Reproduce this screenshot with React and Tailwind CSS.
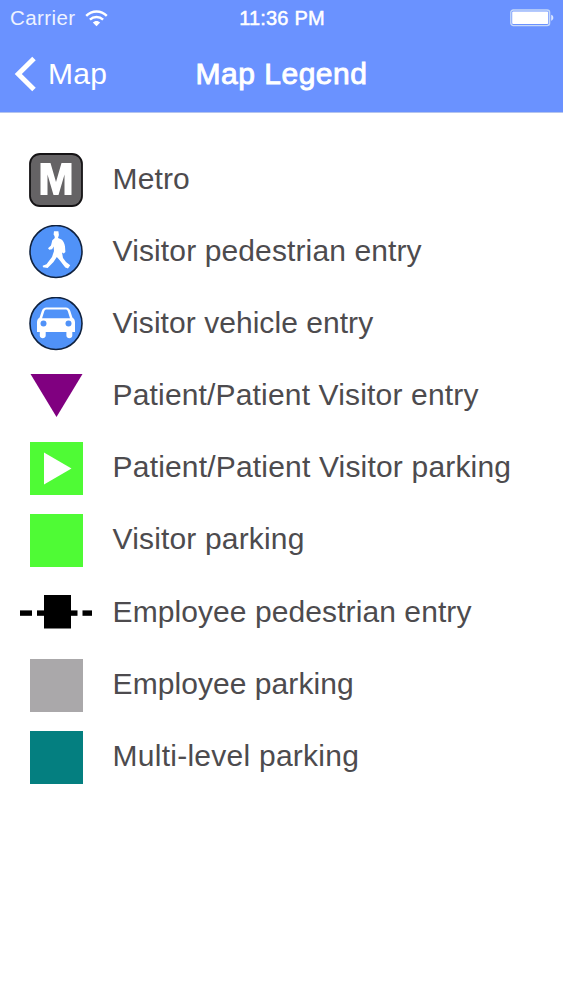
import React from 'react';

const legend = [
  { label: 'Metro', Icon: MetroIcon, spacing: 'tracking-[0.1px]' },
  { label: 'Visitor pedestrian entry', Icon: WalkIcon, spacing: 'tracking-[0.12px]' },
  { label: 'Visitor vehicle entry', Icon: CarIcon, spacing: 'tracking-[0.05px]' },
  { label: 'Patient/Patient Visitor entry', Icon: TriangleIcon, spacing: 'tracking-[0.16px]' },
  { label: 'Patient/Patient Visitor parking', Icon: PlayIcon, spacing: 'tracking-[0.18px]' },
  { label: 'Visitor parking', Icon: () => <Swatch color="bg-[#4ffb35]" />, spacing: 'tracking-[0.16px]' },
  { label: 'Employee pedestrian entry', Icon: GateIcon, spacing: 'tracking-[0.08px]' },
  { label: 'Employee parking', Icon: () => <Swatch color="bg-[#aaa8aa]" />, spacing: 'tracking-[0.06px]' },
  { label: 'Multi-level parking', Icon: () => <Swatch color="bg-[#047f80]" />, spacing: 'tracking-[0.25px]' },
];

function App() {
  return (
    <div className="min-h-screen bg-white font-['Liberation_Sans',Arial,sans-serif]">
      <header className="h-[113px] bg-[#6a92ff] border-b border-[#b4c4ee] text-white">
        <StatusBar />
        <NavBar />
      </header>

      <main className="pt-[31px] pl-5">
        {legend.map(({ label, Icon, spacing }) => (
          <div key={label} className="flex items-center h-[72.15px]">
            <div className="w-[72px] flex justify-center shrink-0">
              <Icon />
            </div>
            <span className={`ml-[20.6px] pb-[2.6px] text-[30px] leading-none whitespace-nowrap text-[#4d4b4e] ${spacing}`}>
              {label}
            </span>
          </div>
        ))}
      </main>
    </div>
  );
}

function StatusBar() {
  return (
    <div className="grid grid-cols-3 items-center h-9 pl-[10px] pr-[9px]">
      <div className="flex items-center gap-[10px]">
        <span className="text-[20.5px] leading-none tracking-[0.4px] text-[#eef3ff]">Carrier</span>
        <svg width="23" height="17" viewBox="0 0 23 17" fill="none" stroke="white" strokeWidth="2.4">
          <path d="M1.2 5.9C7 .1 16 .1 21.8 5.9" />
          <path d="M4.9 9.7C8.7 6 14.3 6 18.1 9.7" />
          <path d="M11.5 16.2L7.8 12.5C9.8 10.4 13.2 10.4 15.2 12.5Z" fill="white" stroke="none" />
        </svg>
      </div>
      <span className="text-center text-[20px] leading-none tracking-[0.2px] whitespace-nowrap [-webkit-text-stroke:0.5px_white]">11:36 PM</span>
      <div className="flex justify-end">
        <svg width="44" height="18" viewBox="0 0 44 18">
          <rect x=".8" y="1" width="38.8" height="15.6" rx="2.5" fill="#6a92ff" stroke="#c5d8f8" strokeWidth="1.4" />
          <rect x="2.2" y="2.6" width="36" height="12.4" rx="1" fill="white" />
          <path d="M41.2 5.8C44 6.5 44 11 41.2 11.8Z" fill="#dce7ff" />
        </svg>
      </div>
    </div>
  );
}

function NavBar() {
  return (
    <div className="grid grid-cols-3 items-center h-[76px] pl-[14px] pr-[14px]">
      <button className="flex items-center gap-[12px]">
        <svg width="22" height="36" viewBox="0 0 22 36" fill="none" stroke="white" strokeWidth="5">
          <path d="M20 2.5L4.3 18L20 33.5" />
        </svg>
        <span className="text-[30px] leading-none tracking-[0.3px]">Map</span>
      </button>
      <h1 className="justify-self-center text-[30px] leading-none tracking-[0.5px] whitespace-nowrap [-webkit-text-stroke:0.9px_white]">
        Map Legend
      </h1>
    </div>
  );
}

// Legend symbols
function Swatch({ color }) {
  return <div className={`size-[53px] ${color}`} />;
}

function MetroIcon() {
  return (
    <svg width="54" height="54" viewBox="0 0 54 54">
      <rect x="1" y="1" width="52" height="52" rx="10" fill="#656365" stroke="#151315" strokeWidth="1.8" />
      <path d="M11.5 10H21.5L27 29L32.5 10H42.5V42H35.5V21.5L29.5 42H24.5L18.5 21.5V42H11.5Z" fill="white" />
    </svg>
  );
}

function WalkIcon() {
  return (
    <svg width="54" height="54" viewBox="0 0 54 54">
      <circle cx="27" cy="26.5" r="26" fill="#5092f8" stroke="#10223f" strokeWidth="1.6" />
      <path
        fill="white"
        d="M25 6.3L29.4 6.2L29.9 10L29 13L32.5 14.5C34.5 16 35.5 18.5 36 21.5L36.4 27L34.8 28.5L33 27.5L34 33L37 37L41.2 40.2L39 43.5L36.3 42.5L30.5 35L27.8 32L24.5 37L18.6 43L14 42.2L13.7 40.8L17.5 39.3L23 32L25 26L24.6 21.5L23.2 24.2L20.3 24.8L19 23.2L22 20.5L23.3 15.2L25.8 13L25.5 11L24.6 9.5Z"
      />
    </svg>
  );
}

function CarIcon() {
  return (
    <svg width="54" height="54" viewBox="0 0 54 54">
      <circle cx="27" cy="26.5" r="26" fill="#5092f8" stroke="#10223f" strokeWidth="1.6" />
      <path
        fillRule="evenodd"
        fill="white"
        d="M17.5 10.5H36.8C39.2 10.5 40.5 11.7 41.3 14L43.4 20.5C45.2 21.6 46 23.2 46 25.5V35H43.3V38.5C43.3 42.2 37.4 42.2 37.4 38.5V35H16.7V38.5C16.7 42.2 10.8 42.2 10.8 38.5V35H8V25.5C8 23.2 8.8 21.6 10.6 20.5L12.8 14C13.6 11.7 15 10.5 17.5 10.5ZM17.8 12.6C16.4 12.6 15.7 13.1 15.2 14.5L13.1 21.3H41L38.9 14.5C38.4 13.1 37.7 12.6 36.4 12.6Z"
      />
      <circle cx="14.5" cy="26.5" r="3" fill="#5092f8" />
      <circle cx="39.5" cy="26.5" r="3" fill="#5092f8" />
    </svg>
  );
}

function TriangleIcon() {
  return (
    <svg width="54" height="44" viewBox="0 0 54 44">
      <path d="M1.5 0H53.5L27.5 43Z" fill="#800080" />
    </svg>
  );
}

function PlayIcon() {
  return (
    <svg width="53" height="53" viewBox="0 0 53 53">
      <rect width="53" height="53" fill="#4ffb35" />
      <path d="M14 10.5L41.5 26.5L14 42.5Z" fill="white" />
    </svg>
  );
}

function GateIcon() {
  return (
    <svg className="mb-[2px]" width="72" height="34" viewBox="0 0 72 34" fill="black">
      <rect x="0" y="15.4" width="12" height="5.4" />
      <rect x="17" y="15.4" width="40.5" height="5.4" />
      <rect x="62.5" y="15.4" width="9.5" height="5.4" />
      <rect x="24" y="0" width="27" height="33.5" />
    </svg>
  );
}

export default App;
